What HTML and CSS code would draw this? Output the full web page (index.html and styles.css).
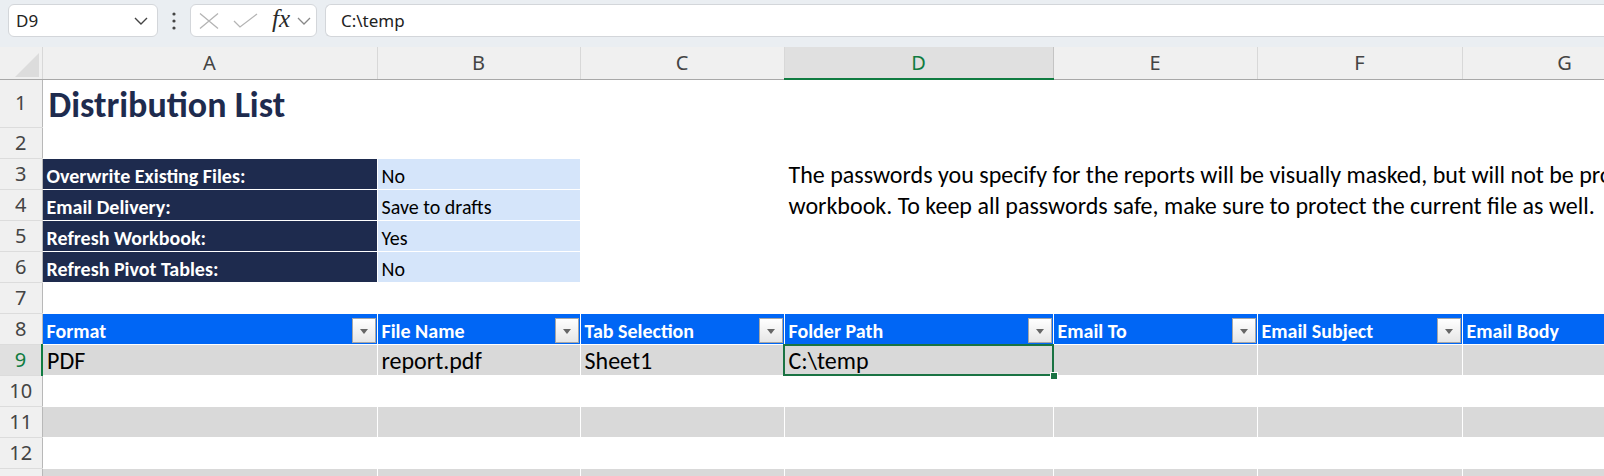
FILE: index.html
```html
<!DOCTYPE html>
<html lang="en">
<head>
    <meta charset="UTF-8">
    <meta name="viewport" content="width=device-width, initial-scale=1.0">
    <title>Distribution List</title>
    <link rel="stylesheet" href="styles.css">
</head>
<body>
    <!-- formula bar strip -->
    <div class="toolbar">
        <div class="namebox">
            <span>D9</span>
            <svg class="chev" width="14" height="8" viewBox="0 0 14 8"><path d="M1 1l6 6 6-6" fill="none" stroke="#444" stroke-width="1.4"/></svg>
        </div>
        <div class="dots">
            <svg width="4" height="18" viewBox="0 0 4 18"><circle cx="2" cy="2" r="1.6" fill="#444"/><circle cx="2" cy="9" r="1.6" fill="#444"/><circle cx="2" cy="16" r="1.6" fill="#444"/></svg>
        </div>
        <div class="fbtns">
            <svg width="20" height="16" viewBox="0 0 20 16"><path d="M1 0.5l18 15M19 0.5l-18 15" stroke="#b4b4b4" stroke-width="1.3" fill="none"/></svg>
            <svg width="25" height="15" viewBox="0 0 25 15"><path d="M1 8l6 6L24 1" stroke="#b4b4b4" stroke-width="1.3" fill="none"/></svg>
            <span class="fx">fx</span>
            <svg class="chev" width="14" height="8" viewBox="0 0 14 8"><path d="M1 1l6 6 6-6" fill="none" stroke="#888" stroke-width="1.3"/></svg>
        </div>
        <div class="fbar">C:\temp</div>
    </div>

    <table class="sheet">
        <colgroup>
            <col class="c-rh">
            <col class="c-a">
            <col class="c-b">
            <col class="c-c">
            <col class="c-d">
            <col class="c-e">
            <col class="c-f">
            <col class="c-g">
        </colgroup>
        <tr class="colhead">
            <th class="corner"><span class="tri"></span></th>
            <th>A</th>
            <th>B</th>
            <th>C</th>
            <th class="sel">D</th>
            <th>E</th>
            <th>F</th>
            <th>G</th>
        </tr>
        <tr class="r-title">
            <td class="rh">1</td>
            <td class="title">Distribution List</td>
            <td></td><td></td><td></td><td></td><td></td><td></td>
        </tr>
        <tr>
            <td class="rh">2</td>
            <td></td><td></td><td></td><td></td><td></td><td></td><td></td>
        </tr>
        <tr>
            <td class="rh">3</td>
            <td class="label">Overwrite Existing Files:</td>
            <td class="value">No</td>
            <td></td>
            <td class="note">The passwords you specify for the reports will be visually masked, but will not be protected in the</td>
            <td></td><td></td><td></td>
        </tr>
        <tr>
            <td class="rh">4</td>
            <td class="label">Email Delivery:</td>
            <td class="value">Save to drafts</td>
            <td></td>
            <td class="note">workbook. To keep all passwords safe, make sure to protect the current file as well.</td>
            <td></td><td></td><td></td>
        </tr>
        <tr>
            <td class="rh">5</td>
            <td class="label">Refresh Workbook:</td>
            <td class="value">Yes</td>
            <td></td><td></td><td></td><td></td><td></td>
        </tr>
        <tr>
            <td class="rh">6</td>
            <td class="label">Refresh Pivot Tables:</td>
            <td class="value">No</td>
            <td></td><td></td><td></td><td></td><td></td>
        </tr>
        <tr>
            <td class="rh">7</td>
            <td></td><td></td><td></td><td></td><td></td><td></td><td></td>
        </tr>
        <tr class="thead">
            <td class="rh">8</td>
            <td><div class="hd">Format<span class="dd"></span></div></td>
            <td><div class="hd">File Name<span class="dd"></span></div></td>
            <td><div class="hd">Tab Selection<span class="dd"></span></div></td>
            <td><div class="hd">Folder Path<span class="dd"></span></div></td>
            <td><div class="hd">Email To<span class="dd"></span></div></td>
            <td><div class="hd">Email Subject<span class="dd"></span></div></td>
            <td><div class="hd">Email Body</div></td>
        </tr>
        <tr class="band data">
            <td class="rh sel">9</td>
            <td>PDF</td>
            <td>report.pdf</td>
            <td>Sheet1</td>
            <td class="active">C:\temp</td>
            <td></td><td></td><td></td>
        </tr>
        <tr class="plain">
            <td class="rh">10</td>
            <td></td><td></td><td></td><td></td><td></td><td></td><td></td>
        </tr>
        <tr class="band">
            <td class="rh">11</td>
            <td></td><td></td><td></td><td></td><td></td><td></td><td></td>
        </tr>
        <tr class="plain">
            <td class="rh">12</td>
            <td></td><td></td><td></td><td></td><td></td><td></td><td></td>
        </tr>
        <tr class="band">
            <td class="rh"></td>
            <td></td><td></td><td></td><td></td><td></td><td></td><td></td>
        </tr>
    </table>
</body>
</html>
```

FILE: styles.css
```css
body {
    margin: 0;
    padding: 0;
    background: #ffffff;
    overflow: hidden;
    font-family: "Noto Sans", sans-serif;
    color: #222;
}

/* top strip */
.toolbar {
    display: flex;
    align-items: center;
    height: 47px;
    padding: 0 0 6px 8px;
    box-sizing: border-box;
    background: #eaeef2;
}

.namebox,
.fbtns,
.fbar {
    height: 33px;
    box-sizing: border-box;
    background: #fff;
    border: 1px solid #d3d6da;
    border-radius: 6px;
    display: flex;
    align-items: center;
}

.namebox {
    width: 150px;
    padding: 0 9px 0 7px;
    justify-content: space-between;
    font-size: 17px;
}

.dots {
    width: 32px;
    display: flex;
    justify-content: center;
}

.fbtns {
    width: 127px;
    padding: 0 0 0 8px;
}

.fbtns svg:first-child {
    margin-right: 14px;
}

.fx {
    font-family: "Liberation Serif", serif;
    font-style: italic;
    font-size: 25px;
    color: #2a2a2a;
    margin: -4px 7px 0 14px;
}

.fbar {
    flex: 1;
    margin-left: 8px;
    border-right: none;
    border-radius: 6px 0 0 6px;
    padding-left: 15px;
    font-size: 17px;
}

/* grid */
.sheet {
    table-layout: fixed;
    border-collapse: collapse;
    width: 1667px;
}

.c-rh { width: 42px; }
.c-a { width: 335px; }
.c-b { width: 203px; }
.c-c { width: 204px; }
.c-d { width: 269px; }
.c-e { width: 204px; }
.c-f { width: 205px; }
.c-g { width: 205px; }

.sheet th,
.sheet td {
    padding: 0 0 0 4px;
    white-space: nowrap;
    overflow: visible;
}

.sheet td {
    height: 31px;
    box-sizing: border-box;
    border-right: 1px solid #fff;
    border-bottom: 1px solid #fff;
    vertical-align: bottom;
    font-family: Carlito, "Open Sans", sans-serif;
    font-size: 20px;
    line-height: 26px;
    color: #000;
}

.colhead th {
    height: 32px;
    box-sizing: border-box;
    background: #f0f0f0;
    border-right: 1px solid #d8d8d8;
    border-bottom: 1px solid #a8a8a8;
    font-family: "Noto Sans", sans-serif;
    font-weight: normal;
    font-size: 20px;
    color: #444;
    text-align: center;
    padding: 0;
}

.colhead th.sel {
    background: #e0e0e0;
    color: #107c41;
    border-left: 1px solid #c4c4c4;
    border-right: 1px solid #c4c4c4;
    border-bottom: 2px solid #107c41;
}

.corner {
    position: relative;
}

.tri {
    position: absolute;
    right: 3px;
    bottom: 2px;
    width: 0;
    height: 0;
    border-left: 24px solid transparent;
    border-bottom: 24px solid #dcdcdc;
}

.sheet td.rh {
    background: #f0f0f0;
    border-right: 1px solid #b8b8b8;
    border-bottom: 1px solid #dcdcdc;
    font-family: "Noto Sans", sans-serif;
    font-size: 20px;
    color: #444;
    text-align: center;
    vertical-align: middle;
    padding: 0;
}

.sheet td.rh.sel {
    background: #e0e0e0;
    color: #107c41;
    border-right: 2px solid #107c41;
}

.r-title td {
    height: 48px;
}

.title {
    font-weight: bold;
    font-size: 36px !important;
    color: #1e2b4e !important;
    line-height: 44px !important;
    padding-left: 6px !important;
}

.label {
    background: #1e2b4e;
    color: #fff !important;
    font-weight: bold;
}

.value {
    background: #d5e5fa;
}

.note {
    font-size: 24px !important;
    line-height: 28px !important;
}

.thead td:not(.rh) {
    background: #0066f5;
    color: #fff;
    font-weight: bold;
    padding-right: 1px;
}

.hd {
    display: flex;
    justify-content: space-between;
    align-items: flex-end;
    height: 29px;
}

.dd {
    width: 22px;
    height: 23px;
    margin-bottom: 1px;
    border: 1px solid #a6a6a6;
    background: linear-gradient(#ffffff, #e6e6e6);
    position: relative;
}

.dd::after {
    content: "";
    position: absolute;
    left: 7px;
    top: 10px;
    border-left: 4px solid transparent;
    border-right: 4px solid transparent;
    border-top: 5px solid #666;
}

.band td:not(.rh) {
    background: #d9d9d9;
}

.data td:not(.rh) {
    font-size: 24px;
    line-height: 28px;
}

.active {
    position: relative;
}

.active::after {
    content: "";
    position: absolute;
    left: -2px;
    top: -1px;
    right: -1px;
    bottom: -1px;
    border: 2px solid #1a7343;
}

.active::before {
    content: "";
    position: absolute;
    right: -5px;
    bottom: -5px;
    width: 6px;
    height: 6px;
    background: #1a7343;
    border: 1px solid #fff;
    z-index: 1;
}
```
